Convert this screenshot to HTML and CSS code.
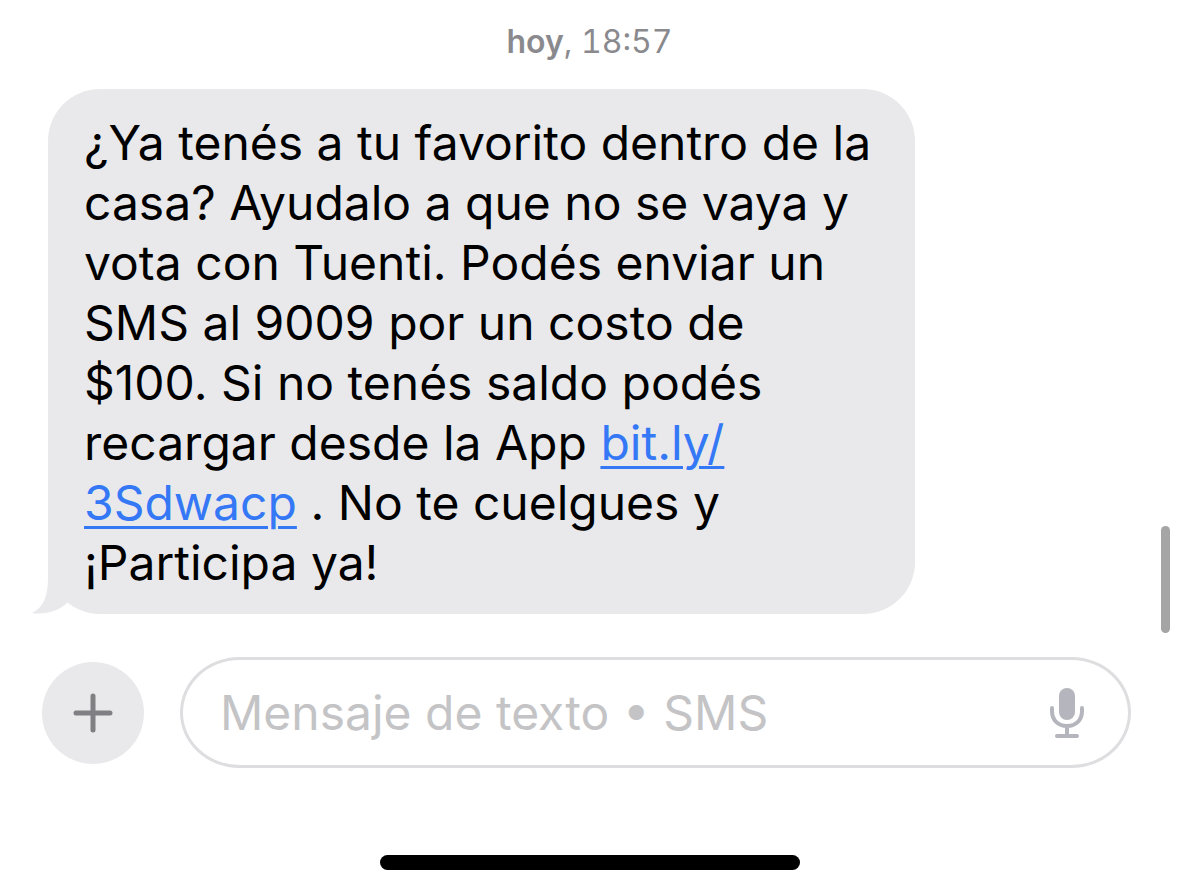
FILE: index.html
```html
<!DOCTYPE html>
<html lang="es">
<head>
    <meta charset="UTF-8">
    <meta name="viewport" content="width=device-width, initial-scale=1.0">
    <title>Mensajes</title>
    <link rel="stylesheet" href="styles.css">
</head>
<body>
    <main class="conversation">
        <p class="timestamp"><span class="timestamp-day">hoy</span>, 18:57</p>

        <div class="bubble">
            <svg class="bubble-tail" viewBox="0 0 50 60" aria-hidden="true">
                <path d="M16 0V24C16 43 11 54 0 59C14 61 27 57 36 48L50 40V0Z"/>
            </svg>
            <p class="bubble-text">¿Ya tenés a tu favorito dentro de la casa? Ayudalo a que no se vaya y vota con Tuenti. Podés enviar un SMS al 9009 por un costo de $100. Si no tenés saldo podés recargar desde la App <a class="bubble-link" href="#">bit.ly/<wbr>3Sdwacp</a> . No te cuelgues y ¡Participa ya!</p>
        </div>
    </main>

    <form class="composer">
        <button class="add-btn" type="button" aria-label="Agregar">
            <svg class="add-icon" viewBox="0 0 40 40" aria-hidden="true">
                <path d="M20 3V37M3 20H37"/>
            </svg>
        </button>
        <div class="field">
            <input class="message-input" type="text" placeholder="Mensaje de texto • SMS" aria-label="Mensaje de texto">
            <button class="mic-btn" type="button" aria-label="Dictar">
                <svg class="mic-icon" viewBox="0 0 36 52" aria-hidden="true">
                    <rect x="9" y="1" width="16" height="32" rx="8"/>
                    <path d="M2 21V24C2 33 8 39 17 39S32 33 32 24V21M17 39V48M7 49H27"/>
                </svg>
            </button>
        </div>
    </form>

    <div class="scroll-thumb"></div>
    <div class="home-indicator"></div>
</body>
</html>
```
FILE: styles.css
```css
:root {
    --bubble: #e9e9eb;
    --text: #000000;
    --muted: #8a8a8e;
    --placeholder: #c4c4c6;
    --link: #3478f6;
    --border: #dedee0;
}

* {
    margin: 0;
    padding: 0;
    box-sizing: border-box;
}

body {
    min-height: 100vh;
    display: flex;
    flex-direction: column;
    background: #ffffff;
    color: var(--text);
    font-family: Inter, sans-serif;
}

.conversation {
    padding: 22px 48px 0;
}

.timestamp {
    color: var(--muted);
    font-size: 32px;
    line-height: 40px;
    text-align: center;
    margin-bottom: 27px;
    font-variant-numeric: tabular-nums;
}

.timestamp-day {
    font-weight: 600;
}

/* Received message */
.bubble {
    position: relative;
    max-width: 867px;
    padding: 24px 36px 21px;
    border-radius: 52px;
    background: var(--bubble);
}

.bubble-tail {
    position: absolute;
    left: -16px;
    bottom: 0;
    width: 50px;
    height: 60px;
    fill: var(--bubble);
}

.bubble-text {
    position: relative;
    font-size: 48px;
    line-height: 60px;
}

.bubble-link {
    color: var(--link);
    text-decoration-thickness: 3px;
    text-underline-offset: 6px;
}

/* Message entry */
.composer {
    display: flex;
    align-items: center;
    gap: 36px;
    padding: 43px 48px 0 42px;
}

.add-btn {
    flex: none;
    display: flex;
    align-items: center;
    justify-content: center;
    width: 102px;
    height: 102px;
    border: none;
    border-radius: 50%;
    background: var(--bubble);
}

.add-icon {
    width: 40px;
    height: 40px;
    fill: none;
    stroke: #808084;
    stroke-width: 5;
    stroke-linecap: round;
}

.field {
    flex: 1;
    display: flex;
    align-items: center;
    height: 111px;
    padding: 0 42px 0 37px;
    border: 3px solid var(--border);
    border-radius: 60px / 56px;
}

.message-input {
    flex: 1;
    min-width: 0;
    border: none;
    outline: none;
    background: none;
    color: var(--text);
    font-family: inherit;
    font-size: 48px;
    line-height: 60px;
}

.message-input::placeholder {
    color: var(--placeholder);
    opacity: 1;
}

.mic-btn {
    display: flex;
    border: none;
    background: none;
}

.mic-icon {
    width: 36px;
    height: 52px;
    fill: none;
    stroke: #b5b5bd;
    stroke-width: 4;
    stroke-linecap: round;
}

.mic-icon rect {
    fill: #b5b5bd;
    stroke: none;
}

/* System overlays */
.scroll-thumb {
    position: absolute;
    top: 526px;
    right: 9px;
    width: 9px;
    height: 107px;
    border-radius: 5px;
    background: #a5a5a5;
}

.home-indicator {
    width: 420px;
    max-width: 60%;
    height: 15px;
    margin: auto auto 24px;
    border-radius: 8px;
    background: #000000;
}
```
